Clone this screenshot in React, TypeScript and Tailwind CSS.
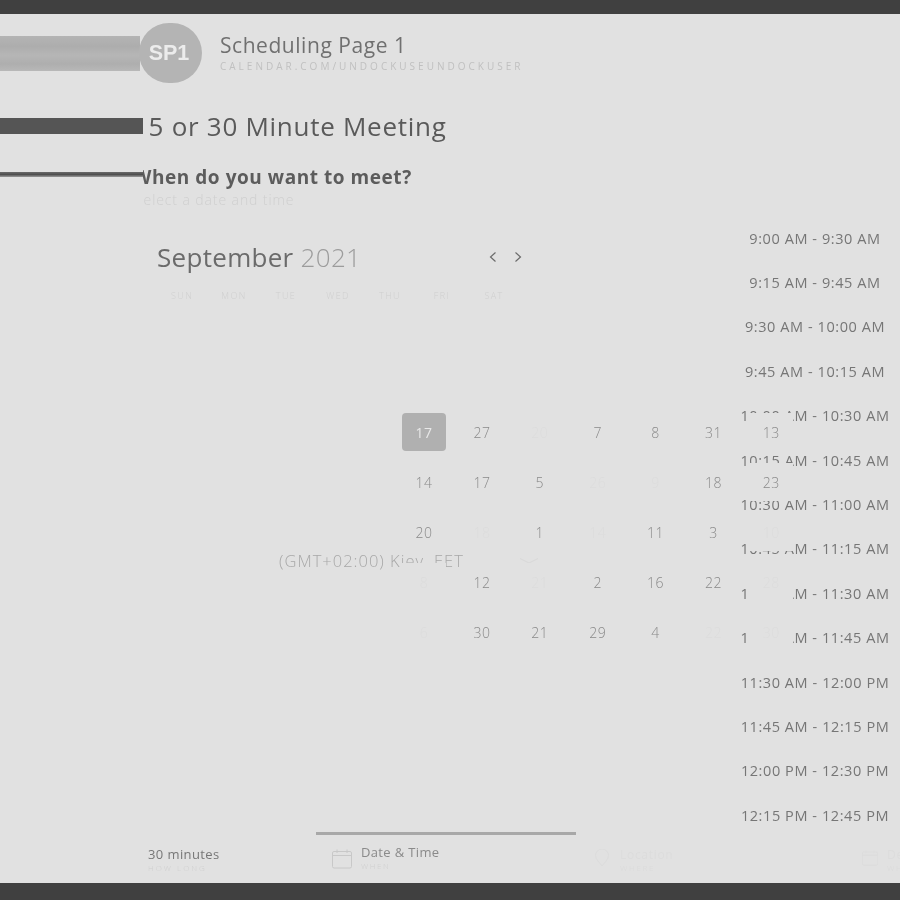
import React from 'react';

const FONT = '[font-family:"Open_Sans",sans-serif]';

const TIMES = [
  '9:00 AM - 9:30 AM',
  '9:15 AM - 9:45 AM',
  '9:30 AM - 10:00 AM',
  '9:45 AM - 10:15 AM',
  '10:00 AM - 10:30 AM',
  '10:15 AM - 10:45 AM',
  '10:30 AM - 11:00 AM',
  '10:45 AM - 11:15 AM',
  '11:00 AM - 11:30 AM',
  '11:15 AM - 11:45 AM',
  '11:30 AM - 12:00 PM',
  '11:45 AM - 12:15 PM',
  '12:00 PM - 12:30 PM',
  '12:15 PM - 12:45 PM'
];

const WEEKDAYS = ['SUN', 'MON', 'TUE', 'WED', 'THU', 'FRI', 'SAT'];

// faint days are the ones with no availability
const DAYS: { label: string; faint?: boolean; selected?: boolean }[] = [
  { label: '17', selected: true },
  { label: '27' },
  { label: '20', faint: true },
  { label: '7' },
  { label: '8' },
  { label: '31' },
  { label: '13' },
  { label: '14' },
  { label: '17' },
  { label: '5' },
  { label: '26', faint: true },
  { label: '9', faint: true },
  { label: '18' },
  { label: '23' },
  { label: '20' },
  { label: '18', faint: true },
  { label: '1' },
  { label: '14', faint: true },
  { label: '11' },
  { label: '3' },
  { label: '10', faint: true },
  { label: '8', faint: true },
  { label: '12' },
  { label: '21', faint: true },
  { label: '2' },
  { label: '16' },
  { label: '22' },
  { label: '28', faint: true },
  { label: '6', faint: true },
  { label: '30' },
  { label: '21' },
  { label: '29' },
  { label: '4' },
  { label: '22', faint: true },
  { label: '30', faint: true }
];

const CalendarIcon = ({ className }: { className: string }) => (
  <svg className={className} viewBox="0 0 20 20" fill="none" stroke="currentColor" strokeWidth="1">
    <rect x="0.5" y="2.5" width="19" height="16.5" rx="1.5" />
    <path d="M0.5 6.5h19M5 0.5v3.5M15 0.5v3.5" />
  </svg>
);

const App = () => {
  return (
    <div className={`relative flex flex-col h-[900px] w-[900px] overflow-hidden bg-[#e1e1e1] grayscale ${FONT}`}>
      <div className="h-[14px] shrink-0 bg-[#404040]" />

      {/* Header */}
      <header className="flex items-center h-[78px] shrink-0">
        <div className="w-[140px] h-[35px] bg-[linear-gradient(#b4b4b4,#adadad_30%,#b6b6b6_55%,#aeaeae_80%,#b8b8b8)]" />
        <div className="-ml-[1px] flex items-center justify-center w-[63px] h-[60px] rounded-full bg-[#b4b4b4]">
          <span className="-ml-[3px] text-[21.5px] font-bold text-[#ececec] [font-family:'Liberation_Sans',sans-serif]">
            SP1
          </span>
        </div>
        <div className="ml-[18px] -mt-[1px]">
          <div className="text-[21px] leading-[24px] tracking-[0.55px] text-[#707070]">Scheduling Page 1</div>
          <div className="mt-[3px] text-[10px] leading-[12px] tracking-[3px] text-[#c0c0c0]">CALENDAR.COM/UNDOCKUSEUNDOCKUSER</div>
        </div>
      </header>

      {/* Title */}
      <div className="flex items-center mt-[22px] h-[24px]">
        <div className="w-[143px] h-[16px] shrink-0 bg-[#555555]" />
        <div className="overflow-hidden">
          <h1 className="-ml-[10px] text-[26px] leading-[34px] tracking-[0.72px] whitespace-nowrap text-[#5a5a5a]">15 or 30 Minute Meeting</h1>
        </div>
      </div>

      <div className="flex items-center mt-[27px] h-[24px]">
        <div className="w-[143px] h-[5px] shrink-0 bg-[linear-gradient(#6a6a6a,#4f4f4f,#9a9a9a)] -mt-[6px]" />
        <div className="overflow-hidden">
          <h2 className="-ml-[10px] text-[19px] leading-[28px] font-bold tracking-[0.55px] whitespace-nowrap text-[#5c5c5c]">When do you want to meet?</h2>
        </div>
      </div>
      <div className="pl-[143px] mt-[1px]">
        <div className="overflow-hidden">
          <p className="-ml-[8px] text-[14px] leading-[20px] font-light tracking-[0.9px] whitespace-nowrap text-[#cfcfcf]">Select a date and time</p>
        </div>
      </div>

      {/* Month */}
      <div className="flex items-center justify-between pl-[157px] w-[523px] mt-[31px] h-[32px]">
        <div className="text-[26px] leading-[32px] tracking-[0.3px] text-[#6b6b6b]">
          September <span className="text-[#9c9c9c] font-light">2021</span>
        </div>
        <div className="flex items-center gap-[15px] text-[#6b6b6b]">
          <svg className="w-[10px] h-[12px]" viewBox="0 0 10 12" fill="none" stroke="currentColor" strokeWidth="1.2">
            <path d="M7.5 1.5 2.5 6l5 4.5" />
          </svg>
          <svg className="w-[10px] h-[12px]" viewBox="0 0 10 12" fill="none" stroke="currentColor" strokeWidth="1.2">
            <path d="M2.5 1.5 7.5 6l-5 4.5" />
          </svg>
        </div>
      </div>

      {/* Weekdays */}
      <div className="grid grid-cols-7 w-[364px] ml-[156px] mt-[17px] text-center text-[9px] leading-[12px] font-light tracking-[1.4px] text-[#cfcfcf]">
        {WEEKDAYS.map(day => (
          <div key={day}>{day}</div>
        ))}
      </div>

      {/* Timezone */}
      <div className="flex items-center ml-[279px] mt-[247px] h-[24px] text-[16.5px] leading-[24px] font-light tracking-[1px] text-[#a8a8a8]">
        <span>(GMT+02:00) Kiev, EET</span>
        <svg className="ml-[55px] w-[20px] h-[8px]" viewBox="0 0 20 8" fill="none" stroke="#d8d8d8" strokeWidth="1">
          <path d="M1 1.5 10 6l9-4.5" />
        </svg>
      </div>

      <div className="flex-1" />

      <div className="h-[17px] shrink-0 bg-[#404040]" />

      {/* Time slots, the day cells sit on top of this list */}
      <ul className="absolute left-[730px] top-[216.5px] w-[170px] text-center text-[14.5px] leading-[44.4px] tracking-[0.58px] text-[#767676]">
        {TIMES.map(time => (
          <li key={time}>{time}</li>
        ))}
      </ul>

      {/* Day cells */}
      <div className="absolute z-10 left-[402px] top-[413px] grid grid-cols-[repeat(7,44px)] auto-rows-[38px] gap-x-[13.9px] gap-y-[12px] text-[14px] tracking-[0.5px] font-light">
        {DAYS.map((day, i) => (
          <div
            key={i}
            className={
              day.selected
                ? 'flex items-center justify-center rounded-[4px] bg-[#b0b0b0] font-medium text-[#e8e8e8]'
                : day.faint
                  ? 'flex items-center justify-center bg-[#e1e1e1] text-[#dcdcdc]'
                  : 'flex items-center justify-center bg-[#e1e1e1] text-[#8a8a8a]'
            }
          >
            {day.label}
          </div>
        ))}
      </div>

      {/* Steps */}
      <div className="absolute left-[148px] top-[846px]">
        <div className="text-[13px] leading-[16px] tracking-[0.4px] text-[#777777]">30 minutes</div>
        <div className="text-[8px] leading-[12px] font-light tracking-[2px] text-[#cfcfcf]">HOW LONG</div>
      </div>
      <div className="absolute left-[316px] top-[832px] w-[260px] h-[3px] bg-[#a8a8a8]" />
      <div className="absolute left-[332px] top-[848px] flex items-start gap-[9px]">
        <CalendarIcon className="w-[20px] h-[20px] mt-[1px] text-[#c8c8c8]" />
        <div className="-mt-[4px]">
          <div className="text-[13px] leading-[16px] tracking-[0.35px] text-[#8a8a8a]">Date &amp; Time</div>
          <div className="text-[8px] leading-[12px] font-light tracking-[1.6px] text-[#cfcfcf]">WHEN</div>
        </div>
      </div>
      <div className="absolute left-[594px] top-[848px] flex items-start gap-[10px] text-[#dcdcdc]">
        <svg className="w-[16px] h-[18px] mt-[1px]" viewBox="0 0 16 18" fill="none" stroke="currentColor">
          <path d="M8 17C4 12 1.5 9.5 1.5 6.5a6.5 6.5 0 0 1 13 0C14.5 9.5 12 12 8 17Z" />
        </svg>
        <div className="-mt-[1px]">
          <div className="text-[12px] leading-[16px] tracking-[0.7px]">Location</div>
          <div className="text-[8px] leading-[10px] tracking-[1.6px]">WHERE</div>
        </div>
      </div>
      <div className="absolute left-[862px] top-[848px] flex items-start gap-[9px] text-[#dcdcdc]">
        <CalendarIcon className="w-[16px] h-[18px] mt-[1px] shrink-0" />
        <div className="-mt-[1px]">
          <div className="text-[12px] leading-[16px] tracking-[0.7px]">Details</div>
          <div className="text-[8px] leading-[10px] tracking-[1.6px]">WHO</div>
        </div>
      </div>
    </div>
  );
};

export default App;
